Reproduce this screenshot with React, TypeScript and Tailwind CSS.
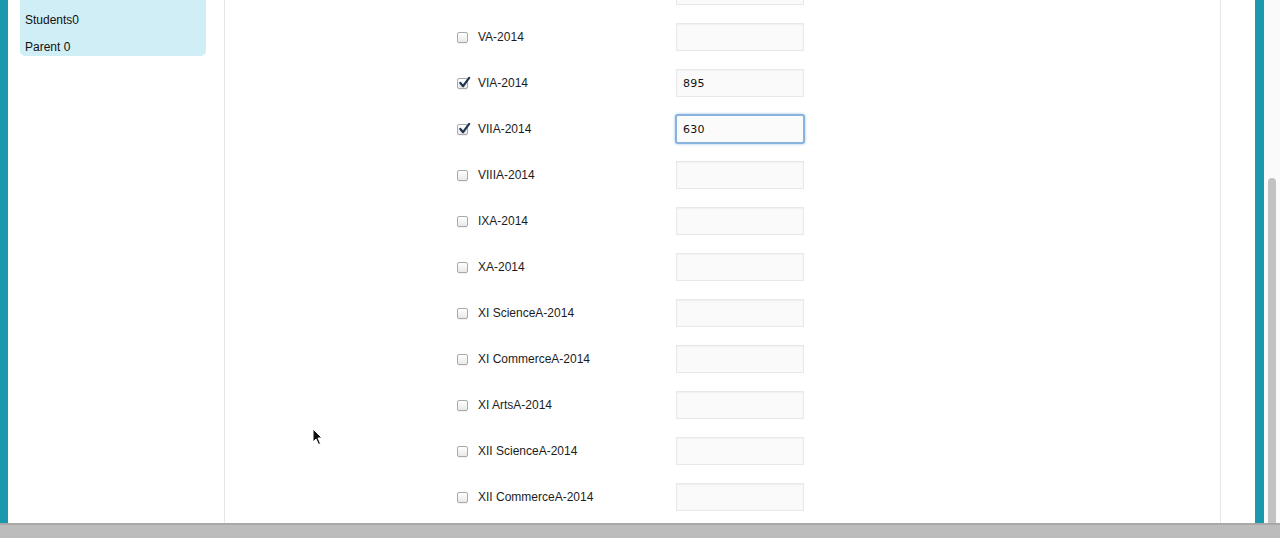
import React from 'react';

interface ClassRow {
  label: string;
  value: string;
  checked: boolean;
  focused?: boolean;
}

const rows: ClassRow[] = [
  { label: '', value: '', checked: false },
  { label: 'VA-2014', value: '', checked: false },
  { label: 'VIA-2014', value: '895', checked: true },
  { label: 'VIIA-2014', value: '630', checked: true, focused: true },
  { label: 'VIIIA-2014', value: '', checked: false },
  { label: 'IXA-2014', value: '', checked: false },
  { label: 'XA-2014', value: '', checked: false },
  { label: 'XI ScienceA-2014', value: '', checked: false },
  { label: 'XI CommerceA-2014', value: '', checked: false },
  { label: 'XI ArtsA-2014', value: '', checked: false },
  { label: 'XII ScienceA-2014', value: '', checked: false },
  { label: 'XII CommerceA-2014', value: '', checked: false },
];

function Checkbox({ checked }: { checked: boolean }) {
  return (
    <span className="relative w-[11px] h-[11px] rounded-[2px] border border-[#a9a9a9] bg-gradient-to-b from-white to-[#e9e9e9] shadow-[0_1px_0_rgba(0,0,0,0.05)] flex-shrink-0">
      {checked && (
        <svg viewBox="0 0 14 14" className="absolute left-[0px] top-[-3px] w-[13px] h-[13px]">
          <path d="M2.5 7.5 L5.5 11 L12 2" fill="none" stroke="#1f3550" strokeWidth="2.4" strokeLinecap="round" strokeLinejoin="round" />
        </svg>
      )}
    </span>
  );
}

function Row({ row }: { row: ClassRow }) {
  return (
    <div className="h-[46px] flex items-center">
      <div className="w-[232px]" />
      <div className="w-[219px] flex items-center">
        {row.label && <Checkbox checked={row.checked} />}
        {row.label && <span className="ml-[10px] text-[12px] text-[#1c1c1c]">{row.label}</span>}
      </div>
      <div
        className={
          row.focused
            ? 'w-[130px] h-[30px] -ml-[1px] rounded-[3px] border-2 border-[#88b3dd] shadow-[0_0_3px_rgba(90,150,210,0.6)] bg-[#fbfbfb] flex items-center pl-[6px] pt-[2px]'
            : 'w-[128px] h-[28px] border border-[#e8e8e8] bg-[#fafafa] shadow-[inset_0_1px_1px_rgba(0,0,0,0.04)] flex items-center pl-[6px] pt-[2px]'
        }
      >
        <span className="text-[11px] text-[#111] font-['DejaVu_Sans',sans-serif] tracking-[0.2px]">{row.value}</span>
      </div>
    </div>
  );
}

export default function App() {
  return (
    <div className="w-[1280px] h-[538px] flex flex-col overflow-hidden bg-white font-['Liberation_Sans',Arial,sans-serif]">
      <div className="flex flex-1 min-h-0">
        <div className="w-[8px] bg-[#1a98ad]" />
        <div className="w-[216px] flex-shrink-0 pl-[12px]">
          <div className="w-[186px] h-[56px] bg-[#cfeef6] rounded-b-[5px] flex flex-col pl-[5px] text-[12px] text-[#111]">
            <div className="h-[11px]" />
            <div className="leading-[18px]">Students0</div>
            <div className="h-[9px]" />
            <div className="leading-[18px]">Parent 0</div>
          </div>
        </div>
        <div className="w-px bg-[#e6e6e6]" />
        <div className="relative w-[995px] overflow-hidden">
          <div className="flex flex-col -mt-[32px]">
            {rows.map((row, i) => (
              <Row key={i} row={row} />
            ))}
          </div>
          <svg className="absolute left-[87px] top-[428px]" width="12" height="18" viewBox="0 0 12 18">
            <path d="M1 1 L1 14 L4 11 L6.5 16.5 L8.5 15.5 L6 10 L10 10 Z" fill="#111" stroke="#fff" strokeWidth="1" />
          </svg>
        </div>
        <div className="w-px bg-[#e6e6e6]" />
        <div className="w-[34px]" />
        <div className="w-[9px] bg-[#1a98ad]" />
        <div className="w-[16px] bg-[#fbfafa] flex flex-col items-center pt-[178px]">
          <div className="w-[8px] flex-1 rounded-t-full bg-[#c2c2c2]" />
        </div>
      </div>
      <div className="h-[15px] bg-[#bcbcbc] border-t-2 border-[#a8a8a8]" />
    </div>
  );
}
